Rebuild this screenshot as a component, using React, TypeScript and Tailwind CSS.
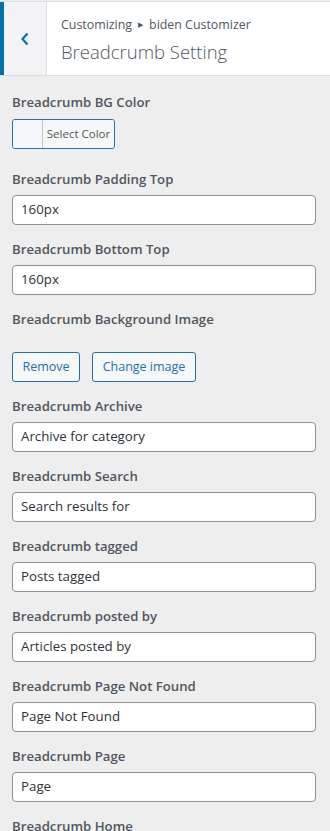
import React from "react";

const font = { fontFamily: '"Open Sans", "Noto Sans", Arial, sans-serif' };

function Label({ children, className = "" }: { children: React.ReactNode; className?: string }) {
  return (
    <div className={`text-[13.2px] leading-[20px] font-semibold text-[#50575e] ${className}`}>{children}</div>
  );
}

function TextField({ label, value }: { label: string; value: string }) {
  return (
    <div className="mb-[14px]">
      <Label className="mb-[6px]">{label}</Label>
      <div className="h-[30px] w-[304px] rounded-[4px] border border-[#8c8f94] bg-white px-[8px] flex items-center text-[13.3px] text-[#2c3338]">
        {value}
      </div>
    </div>
  );
}

export default function App() {
  return (
    <div className="h-[831px] w-[330px] bg-[#eeeeee] overflow-hidden" style={font}>
      <div className="h-[1px]" />
      <div className="flex h-[75px] border-t border-b border-[#dcdcde] bg-white">
        <div className="w-[4px] bg-[#0073aa]" />
        <div className="w-[43px] bg-[#f3f3f5] border-r border-[#dcdcde] flex items-center justify-center">
          <svg width="10" height="14" viewBox="0 0 10 14">
            <polyline points="7.5,1.5 2.5,7 7.5,12.5" fill="none" stroke="#0073aa" strokeWidth="2.2" />
          </svg>
        </div>
        <div className="pl-[14px] pt-[13px]">
          <div className="text-[12.4px] leading-[20px] text-[#50575e] flex items-center">
            Customizing
            <span className="text-[7px] mx-[6px] text-[#50575e]">▶</span>
            biden Customizer
          </div>
          <div className="text-[18.5px] leading-[28px] font-light text-[#50575e] mt-[3px]">Breadcrumb Setting</div>
        </div>
      </div>
      <div className="px-[12px] pt-[16px]">
        <Label className="mb-[7px]">Breadcrumb BG Color</Label>
        <div className="flex h-[30px] w-[103px] rounded-[3px] border border-[#2271b1] overflow-hidden mb-[20px]">
          <div className="w-[30px] bg-[#f4f8fb] border-r border-[#c3c4c7]" />
          <div className="flex-1 bg-[#f6f7f7] flex items-center justify-center text-[11.5px] text-[#50575e]">Select Color</div>
        </div>
        <TextField label="Breadcrumb Padding Top" value="160px" />
        <TextField label="Breadcrumb Bottom Top" value="160px" />
        <Label className="mb-[23px]">Breadcrumb Background Image</Label>
        <div className="flex gap-[12px] mb-[14px]">
          <div className="h-[30px] w-[68px] rounded-[3px] border border-[#2271b1] bg-[#f6f7f7] flex items-center justify-center text-[12.5px] text-[#2271b1]">Remove</div>
          <div className="h-[30px] w-[104px] rounded-[3px] border border-[#2271b1] bg-[#f6f7f7] flex items-center justify-center text-[12.5px] text-[#2271b1]">Change image</div>
        </div>
        <TextField label="Breadcrumb Archive" value="Archive for category" />
        <TextField label="Breadcrumb Search" value="Search results for" />
        <TextField label="Breadcrumb tagged" value="Posts tagged" />
        <TextField label="Breadcrumb posted by" value="Articles posted by" />
        <TextField label="Breadcrumb Page Not Found" value="Page Not Found" />
        <TextField label="Breadcrumb Page" value="Page" />
        <TextField label="Breadcrumb Home" value="Home" />
      </div>
    </div>
  );
}
